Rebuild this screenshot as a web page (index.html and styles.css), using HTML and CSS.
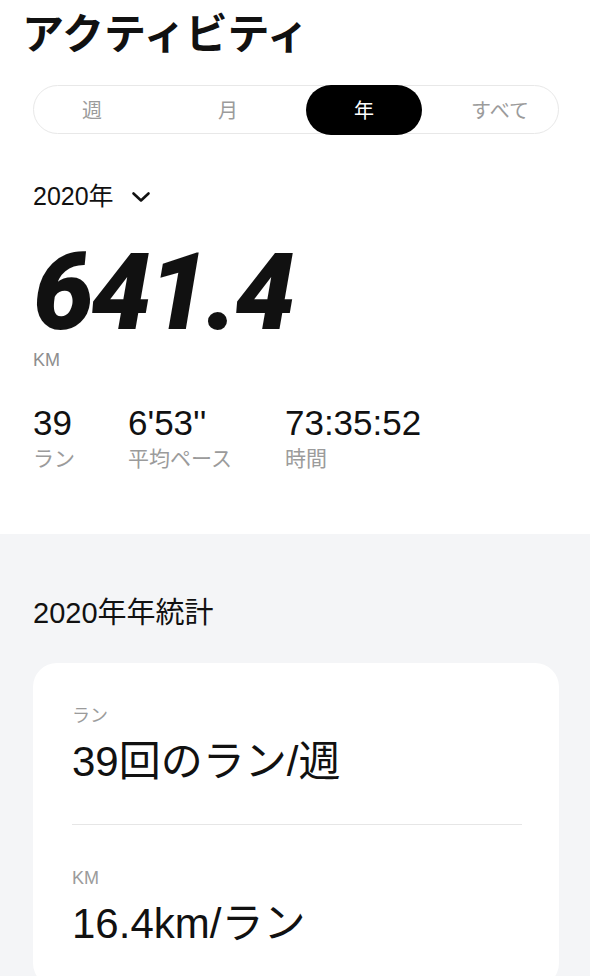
FILE: index.html
```html
<!DOCTYPE html>
<html lang="ja">
<head>
    <meta charset="UTF-8">
    <meta name="viewport" content="width=device-width, initial-scale=1.0">
    <title>アクティビティ</title>
    <link rel="stylesheet" href="styles.css">
</head>
<body>
    <section class="summary">
        <h1 class="page-title">アクティビティ</h1>

        <div class="segments">
            <button class="segment">週</button>
            <button class="segment">月</button>
            <button class="segment active">年</button>
            <button class="segment">すべて</button>
        </div>

        <div class="period-picker">
            <span>2020年</span>
            <svg class="chevron" width="20" height="12" viewBox="0 0 20 12">
                <path d="M2.5 2.5 L10 9.5 L17.5 2.5" fill="none" stroke="#111" stroke-width="2.6" stroke-linecap="round" stroke-linejoin="round"/>
            </svg>
        </div>

        <div class="total-distance">641.4</div>
        <div class="total-unit">KM</div>

        <div class="stats-row">
            <div class="stat">
                <div class="stat-value">39</div>
                <div class="stat-label">ラン</div>
            </div>
            <div class="stat">
                <div class="stat-value">6'53''</div>
                <div class="stat-label">平均ペース</div>
            </div>
            <div class="stat">
                <div class="stat-value">73:35:52</div>
                <div class="stat-label">時間</div>
            </div>
        </div>
    </section>

    <section class="yearly">
        <h2 class="yearly-title">2020年年統計</h2>
        <div class="yearly-card">
            <div class="card-item">
                <div class="card-label">ラン</div>
                <div class="card-value">39回のラン/週</div>
            </div>
            <div class="card-item">
                <div class="card-label">KM</div>
                <div class="card-value">16.4km/ラン</div>
            </div>
        </div>
    </section>
</body>
</html>
```

FILE: styles.css
```css
/* General body styling */
html {
    overflow: hidden;
}

body {
    font-family: "Liberation Sans", "Noto Sans CJK JP", sans-serif;
    margin: 0;
    padding: 0;
    background-color: #ffffff;
    color: #111111;
    height: 976px;
    overflow: hidden;
}

/* Top summary */
.summary {
    padding: 6px 31px 62px 33px;
}

.page-title {
    margin: 0 0 29px -11px;
    font-family: "Noto Sans CJK JP", sans-serif;
    font-size: 42px;
    line-height: 50px;
    font-weight: 700;
}

/* Week / month / year / all switch */
.segments {
    display: flex;
    justify-content: space-between;
    height: 49px;
    border: 1.5px solid #e8e8e8;
    border-radius: 25px;
    box-sizing: border-box;
}

.segment {
    width: 116px;
    margin: -1.5px 0;
    border: none;
    border-radius: 25px;
    background: none;
    font-family: "Noto Sans CJK JP", sans-serif;
    font-size: 20px;
    color: #9b9b9b;
    padding: 0;
}

.segment.active {
    background-color: #000000;
    color: #ffffff;
}

.period-picker {
    display: flex;
    align-items: center;
    gap: 17px;
    margin-top: 47px;
    font-size: 25px;
    line-height: 30px;
}

.chevron {
    margin-top: 1px;
}

/* Big distance number */
.total-distance {
    margin-top: 39px;
    font-family: Roboto, sans-serif;
    font-size: 108px;
    line-height: 84px;
    font-weight: 900;
    font-style: italic;
    letter-spacing: -3px;
}

.total-unit {
    margin-top: 15px;
    font-size: 18px;
    line-height: 22px;
    color: #8e8e8e;
}

.stats-row {
    display: flex;
    gap: 53px;
    margin-top: 33px;
}

.stat-value {
    font-size: 35px;
    line-height: 38px;
}

.stat-label {
    margin-top: 4px;
    font-size: 21px;
    line-height: 26px;
    color: #9b9b9b;
}

/* Yearly stats */
.yearly {
    background-color: #f4f5f7;
    padding: 62px 31px 0 33px;
    height: 100%;
}

.yearly-title {
    margin: 0 0 33px;
    font-size: 29px;
    line-height: 34px;
    font-weight: 400;
}

.yearly-card {
    background-color: #ffffff;
    border-radius: 24px;
    padding: 0 37px 0 39px;
}

.card-item {
    padding: 42px 0 37px;
    border-bottom: 1px solid #e6e6e6;
}

.card-label {
    font-size: 18px;
    line-height: 22px;
    color: #9b9b9b;
}

.card-value {
    margin-top: 10px;
    font-size: 42px;
    line-height: 50px;
}
```
